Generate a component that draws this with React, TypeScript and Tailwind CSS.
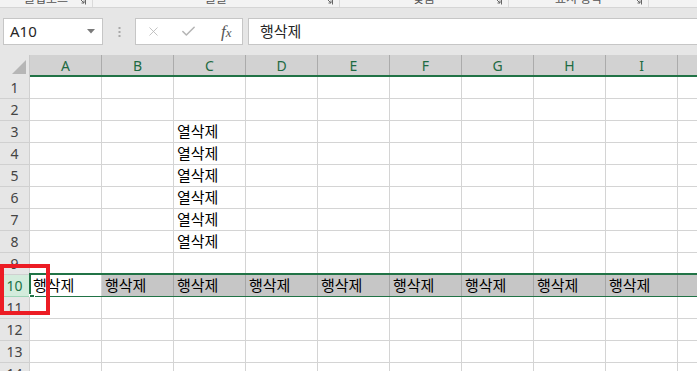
import React from 'react';
import { X, Check } from 'lucide-react';

const columns = ['A', 'B', 'C', 'D', 'E', 'F', 'G', 'H', 'I'];
const rows = [1, 2, 3, 4, 5, 6, 7, 8, 9, 10, 11, 12, 13, 14];

const korean = { fontFamily: '"Noto Sans CJK KR", "Noto Sans", sans-serif' };
const latin = { fontFamily: '"Noto Sans", "Open Sans", sans-serif' };

// cell content lookup: row -> col index -> text
const cellText = (row: number, col: number): string => {
  if (row >= 3 && row <= 8 && col === 2) return '열삭제';
  if (row === 10) return '행삭제';
  return '';
};

const ribbonGroups = [
  { label: '클립보드', width: 93 },
  { label: '글꼴', width: 247 },
  { label: '맞춤', width: 169 },
  { label: '표시 형식', width: 140 },
];

const Launcher: React.FC = () => (
  <svg width="8" height="8" viewBox="0 0 8 8" className="absolute right-[6px] bottom-[2px]">
    <path d="M0.5 0.5 H7.5 V7.5" fill="none" stroke="#666" strokeWidth="1" />
    <path d="M2 2 L6 6 M6 3.5 V6 H3.5" fill="none" stroke="#666" strokeWidth="1" />
  </svg>
);

const App: React.FC = () => {
  return (
    <div className="w-[697px] h-[371px] overflow-hidden bg-white select-none">
      {/* ribbon remains */}
      <div className="flex h-[8px] bg-[#f3f3f3] border-b border-[#d5d5d5] overflow-hidden">
        {ribbonGroups.map((g) => (
          <div
            key={g.label}
            className="relative h-[7px] border-r border-[#dadada] flex justify-center"
            style={{ width: g.width }}
          >
            <span className="text-[12px] leading-[14px] -mt-[9px] text-[#555]" style={korean}>
              {g.label}
            </span>
            <Launcher />
          </div>
        ))}
      </div>

      {/* formula bar */}
      <div className="flex items-center h-[47px] bg-[#e6e6e6] pl-[3px]">
        <div className="flex items-center justify-between w-[100px] h-[27px] bg-white border border-[#c6c6c6] pl-[6px] pr-[7px]">
          <span className="text-[15px] text-[#262626]" style={latin}>A10</span>
          <svg width="8" height="5" viewBox="0 0 8 5">
            <path d="M0 0 H8 L4 4.5 Z" fill="#7a7a7a" />
          </svg>
        </div>
        <div className="w-[32px] flex justify-center">
          <svg width="3" height="10" viewBox="0 0 3 10">
            <rect x="0.5" y="0" width="2" height="2" fill="#a8a8a8" />
            <rect x="0.5" y="4" width="2" height="2" fill="#a8a8a8" />
            <rect x="0.5" y="8" width="2" height="2" fill="#a8a8a8" />
          </svg>
        </div>
        <div className="flex items-center w-[108px] h-[27px] bg-white border border-[#c6c6c6]">
          <div className="w-[36px] flex justify-center">
            <X size={15} strokeWidth={1.3} color="#b5b5b5" />
          </div>
          <div className="w-[36px] flex justify-center">
            <Check size={17} strokeWidth={2.2} color="#b5b5b5" />
          </div>
          <div className="w-[36px] flex justify-center pl-[4px]">
            <span
              className="italic text-[17px] text-[#555]"
              style={{ fontFamily: '"Liberation Serif", serif' }}
            >
              f<span className="text-[13px]">x</span>
            </span>
          </div>
        </div>
        <div className="flex items-center flex-1 h-[27px] ml-[5px] bg-white border border-[#c6c6c6] border-r-0 pl-[11px]">
          <span className="text-[15px] text-[#262626]" style={korean}>행삭제</span>
        </div>
      </div>

      {/* column headers */}
      <div className="flex h-[22px]">
        <div className="relative w-[30px] h-[22px] bg-[#e6e6e6] border-r border-[#c9c9c9]">
          <svg width="14" height="14" viewBox="0 0 14 14" className="absolute right-[3px] bottom-[3px]">
            <path d="M14 0 V14 H0 Z" fill="#b6b6b6" />
          </svg>
        </div>
        <div className="flex flex-1 bg-[#d2d2d2] border-b-2 border-[#217346]">
          {columns.map((c) => (
            <div
              key={c}
              className="w-[72px] shrink-0 flex items-center justify-center border-r border-[#ababab] text-[14px] text-[#1e6b43]"
              style={latin}
            >
              {c}
            </div>
          ))}
          <div className="flex-1" />
        </div>
      </div>

      {/* grid */}
      <div className="relative">
        {rows.map((r) => {
          const selected = r === 10;
          return (
            <div key={r} className="relative flex h-[22px]">
              <div
                className={
                  'w-[30px] shrink-0 flex items-center justify-center border-r border-b text-[14px] ' +
                  (selected
                    ? 'bg-[#d3ecdc] text-[#217346] border-[#9fd5b7]'
                    : 'bg-[#e6e6e6] text-[#444] border-[#d0d0d0]')
                }
                style={latin}
              >
                {r}
              </div>
              {columns.map((c, i) => {
                const text = cellText(r, i);
                const bg = selected && i > 0 ? 'bg-[#c6c6c6] border-[#a6a6a6]' : 'bg-white border-[#d4d4d4]';
                return (
                  <div
                    key={c}
                    className={'w-[72px] shrink-0 flex items-end pl-[3px] pb-[1px] border-r border-b text-[15px] leading-[20px] text-black ' + bg}
                    style={korean}
                  >
                    {text}
                  </div>
                );
              })}
              <div
                className={
                  'flex-1 border-b ' + (selected ? 'bg-[#c6c6c6] border-[#a6a6a6]' : 'bg-white border-[#d4d4d4]')
                }
              />
              {selected && (
                <>
                  <div className="absolute left-[29px] right-[-2px] top-[-2px] bottom-[-1px] border-2 border-[#217346] pointer-events-none" />
                  <div className="absolute left-[29px] bottom-[-3px] w-[6px] h-[6px] bg-[#217346] border border-white" />
                </>
              )}
            </div>
          );
        })}
        {/* red highlight box */}
        <div className="absolute left-0 top-[187px] w-[50px] h-[51px] border-4 border-[#ec1c24] pointer-events-none" />
      </div>
    </div>
  );
};

export default App;
